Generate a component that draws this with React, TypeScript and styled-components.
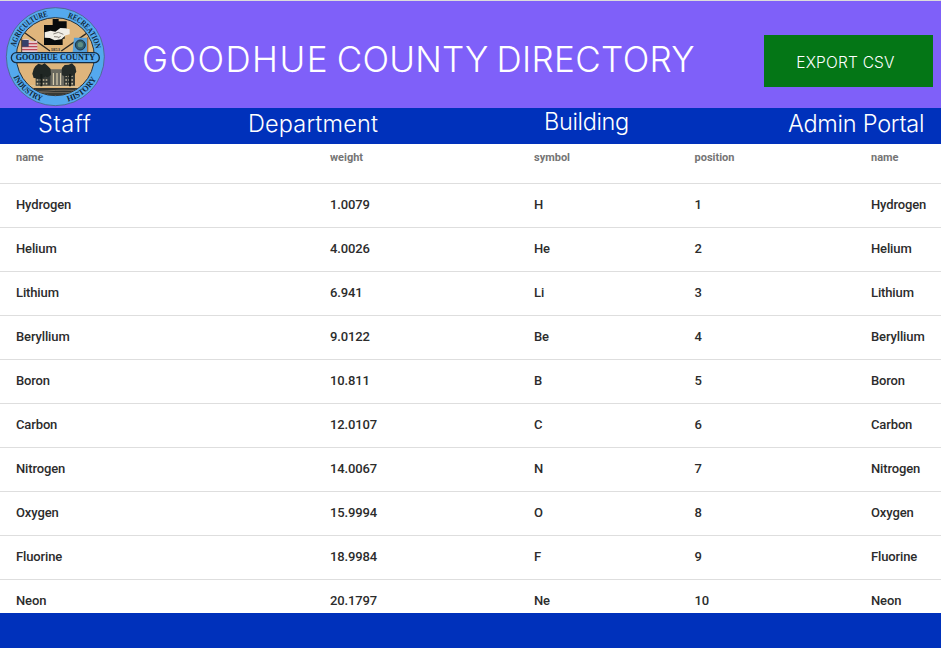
import React from "react";
import styled, { createGlobalStyle } from "styled-components";

const GlobalStyle = createGlobalStyle`
  * { box-sizing: border-box; }
  body { margin: 0; background: #fff; overflow: hidden; }
`;

const Page = styled.div`
  display: flex;
  flex-direction: column;
  width: 941px;
  height: 648px;
  overflow: hidden;
  font-family: Roboto, sans-serif;
`;

const Header = styled.header`
  display: flex;
  flex: none;
  height: 108px;
  padding: 6px 8px 0 5px;
  border-top: 1px solid #dcdcdc;
  background: #7f60f9;
`;

const Seal = styled.svg`
  flex: none;
  width: 100px;
  height: 100px;
`;

const Title = styled.h1`
  flex: 1;
  margin: 30px 0 0 37px;
  color: #fff;
  font: 300 35px/44px Inter, sans-serif;
  word-spacing: -2px;
  white-space: nowrap;
`;

const Word = styled.span<{ $spacing: number }>`
  letter-spacing: ${(p) => p.$spacing}px;
`;

const ExportButton = styled.button`
  width: 169px;
  height: 52px;
  margin-top: 28px;
  padding: 3px 6px 0 0;
  border: 0;
  background: #047616;
  color: #fff;
  font: 300 15.5px/20px Inter, sans-serif;
  letter-spacing: 0.2px;
  white-space: nowrap;
`;

const Nav = styled.nav`
  display: grid;
  grid-template-columns: 210px 296px 244px 1fr;
  flex: none;
  height: 36px;
  padding-left: 38px;
  background: #0031bb;
`;

const NavLink = styled.a<{ $raise?: number; $spacing?: number }>`
  margin-top: ${(p) => -(p.$raise ?? 0)}px;
  color: #fff;
  font: 300 23.5px/32px Inter, sans-serif;
  letter-spacing: ${(p) => p.$spacing ?? 0}px;
  white-space: nowrap;
`;

const Table = styled.div`
  flex: 1;
  overflow: hidden;
  background: #fff;
`;

const Row = styled.div`
  display: grid;
  grid-template-columns: 314px 204px 160.5px 176.5px 1fr;
  height: 44px;
  padding-left: 16px;
  border-bottom: 1px solid #dedede;
  color: #2c2c2c;
  font-size: 13px;
  font-weight: 500;
  letter-spacing: -0.13px;
  line-height: 42px;
`;

const HeadRow = styled(Row)`
  height: 40px;
  color: #757575;
  font-size: 11px;
  font-weight: 700;
  letter-spacing: 0;
  line-height: 27px;
`;

const Cell = styled.span`
  white-space: nowrap;
`;

const Footer = styled.footer`
  flex: none;
  height: 35px;
  background: #0031bb;
`;

const elements: [string, string, string][] = [
  ["Hydrogen", "1.0079", "H"],
  ["Helium", "4.0026", "He"],
  ["Lithium", "6.941", "Li"],
  ["Beryllium", "9.0122", "Be"],
  ["Boron", "10.811", "B"],
  ["Carbon", "12.0107", "C"],
  ["Nitrogen", "14.0067", "N"],
  ["Oxygen", "15.9994", "O"],
  ["Fluorine", "18.9984", "F"],
  ["Neon", "20.1797", "Ne"],
];

function CountySeal() {
  return (
    <Seal viewBox="15 21 300 300" aria-label="Goodhue County seal">
      <defs>
        <path id="arcTop" d="M 43 170 A 123 123 0 0 1 289 170" />
        <path id="arcBottom" d="M 26 170 A 140 140 0 0 0 306 170" />
        <clipPath id="disc"><circle cx="166" cy="170" r="116" /></clipPath>
      </defs>
      <circle cx="166" cy="170" r="147" fill="#54a9ee" stroke="#4b6384" strokeWidth="2.5" />
      <circle cx="166" cy="170" r="117" fill="#dfb57c" stroke="#26313a" strokeWidth="3" />
      <g clipPath="url(#disc)">
        <path d="M72 97 L150 153 M264 97 L184 153" stroke="#2d2924" strokeWidth="4" />
        <path d="M65 121 Q78 112 88 120 T112 120 V156 H65 Z" fill="#e5c9cd" />
        <path d="M66 131h46M66 140h46M66 149h46" stroke="#bd4656" strokeWidth="4" />
        <path d="M65 120h21v20H65z" fill="#35406b" />
        <path d="M65 114v44" stroke="#55402e" strokeWidth="3" />
        <path d="M222 113h42v43h-46z" fill="#579fd8" />
        <circle cx="241" cy="135" r="15" fill="#315f70" stroke="#1c3342" strokeWidth="3" />
        <circle cx="241" cy="134" r="8" fill="#5d8e88" />
        <path d="M263 112v45" stroke="#9d6f3b" strokeWidth="4" />
        <path d="M132 75h26V57h18v7h24v22h-6v30h-6v19h-56z" fill="#090b0c" />
        <path d="M134 97l18-5 14 3 15-11 14 1 14 3v15l-12 3-13 12-20 3-15-7-15-1z" fill="#f1eee7" />
        <path d="M160 102l15-5 15 6M162 110l13 1M174 114l8-5" stroke="#514b43" strokeWidth="2" fill="none" />
        <path d="M47 264h240v62H47z" fill="#303330" />
        <path d="M64 270q40 8 80 3t112 0M78 278h170M99 286h133" stroke="#8c8170" strokeWidth="2" fill="none" />
        <path d="M70 262q25-8 56-3h83l55 3" stroke="#d7c399" strokeWidth="4" fill="none" />
        <path d="M107 218h118v39H107z" fill="#343936" />
        <path d="M151 208h41v49h-41z" fill="#6b6a60" />
        <path d="M110 228h36M110 240h36M110 251h36M196 228h25M196 240h25M196 251h25" stroke="#c9bd9d" strokeWidth="5" strokeDasharray="5 4" />
        <path d="M160 219v36M171 219v36M182 219v36" stroke="#eee1bd" strokeWidth="3" />
        <path d="M106 199l9-8 11 3 8-4 10 9 8 8 1 18-10 7-7-2-9 4-8 2-10-1-8-1-4-13 4-14z" fill="#202724" />
        <path d="M186 204l8-9 12-1 10-4 10 10 3 15-7 11-9 3-8-2-10 2-9-3-1-14z" fill="#252b28" />
        <path d="M124 222v37M210 222v37" stroke="#171d1a" strokeWidth="6" />
      </g>
      <text x="166" y="152" textAnchor="middle" fontFamily="Liberation Serif" fontSize="14" fontWeight="700" fill="#332e27">1853</text>
      <rect x="34" y="158" width="264" height="30" rx="15" fill="#54a9ee" stroke="#172d42" strokeWidth="4" />
      <g fontFamily="Liberation Serif, serif" fontWeight="700" fill="#102536">
        <text x="47" y="181" fontSize="25" textLength="238" lengthAdjust="spacingAndGlyphs">GOODHUE COUNTY</text>
        <g fontSize="25">
          <text><textPath href="#arcTop" startOffset="29" textLength="142" lengthAdjust="spacingAndGlyphs">AGRICULTURE</textPath></text>
          <text><textPath href="#arcTop" startOffset="230" textLength="133" lengthAdjust="spacingAndGlyphs">RECREATION</textPath></text>
          <text><textPath href="#arcBottom" startOffset="63" textLength="114" lengthAdjust="spacingAndGlyphs">INDUSTRY</textPath></text>
          <text><textPath href="#arcBottom" startOffset="258" textLength="112" lengthAdjust="spacingAndGlyphs">HISTORY</textPath></text>
        </g>
      </g>
    </Seal>
  );
}

export default function App() {
  return (
    <Page>
      <GlobalStyle />
      <Header>
        <CountySeal />
        <Title>
          <Word $spacing={1.45}>GOODHUE</Word> <Word $spacing={0.2}>COUNTY</Word>{" "}
          <Word $spacing={0.35}>DIRECTORY</Word>
        </Title>
        <ExportButton>EXPORT CSV</ExportButton>
      </Header>
      <Nav>
        <NavLink $spacing={0.6}>Staff</NavLink>
        <NavLink $spacing={0.15}>Department</NavLink>
        <NavLink $raise={2} $spacing={-0.35}>Building</NavLink>
        <NavLink $spacing={-0.25}>Admin Portal</NavLink>
      </Nav>
      <Table>
        <HeadRow>
          {["name", "weight", "symbol", "position", "name"].map((label, i) => (
            <Cell key={i}>{label}</Cell>
          ))}
        </HeadRow>
        {elements.map(([name, weight, symbol], i) => (
          <Row key={name}>
            <Cell>{name}</Cell>
            <Cell>{weight}</Cell>
            <Cell>{symbol}</Cell>
            <Cell>{i + 1}</Cell>
            <Cell>{name}</Cell>
          </Row>
        ))}
      </Table>
      <Footer />
    </Page>
  );
}
